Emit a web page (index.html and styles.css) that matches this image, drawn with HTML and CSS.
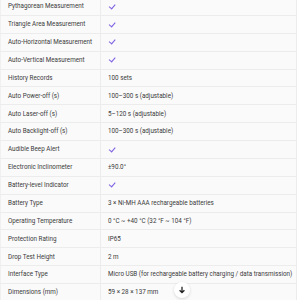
FILE: index.html
```html
<!DOCTYPE html>
<html>
<head>
<meta charset="utf-8">
<link rel="stylesheet" href="styles.css">
</head>
<body>
<div class="wrap">
<table class="specs">
<tr><td>Pythagorean Measurement</td><td><span class="ck"></span></td></tr>
<tr><td>Triangle Area Measurement</td><td><span class="ck"></span></td></tr>
<tr><td>Auto-Horizontal Measurement</td><td><span class="ck"></span></td></tr>
<tr><td>Auto-Vertical Measurement</td><td><span class="ck"></span></td></tr>
<tr><td>History Records</td><td>100 sets</td></tr>
<tr><td>Auto Power-off (s)</td><td>100–300 s (adjustable)</td></tr>
<tr><td>Auto Laser-off (s)</td><td>5–120 s (adjustable)</td></tr>
<tr><td>Auto Backlight-off (s)</td><td>100–300 s (adjustable)</td></tr>
<tr><td>Audible Beep Alert</td><td><span class="ck"></span></td></tr>
<tr><td>Electronic Inclinometer</td><td>±90.0°</td></tr>
<tr><td>Battery-level Indicator</td><td><span class="ck"></span></td></tr>
<tr><td>Battery Type</td><td>3 × Ni-MH AAA rechargeable batteries</td></tr>
<tr><td>Operating Temperature</td><td>0 °C ~ +40 °C (32 °F ~ 104 °F)</td></tr>
<tr><td>Protection Rating</td><td>IP65</td></tr>
<tr><td>Drop Test Height</td><td>2 m</td></tr>
<tr><td>Interface Type</td><td>Micro USB (for rechargeable battery charging / data transmission)</td></tr>
<tr><td>Dimensions (mm)</td><td>59 × 28 × 137 mm</td></tr>
</table>
<div class="down"><svg width="8" height="8" viewBox="0 0 8 8"><path d="M4 0.8V6.4M1.6 4.2L4 6.6L6.4 4.2" fill="none" stroke="#222" stroke-width="1.3"/></svg></div>
</div>
</body>
</html>
```
FILE: styles.css
```css
html, body { margin: 0; padding: 0; background: #ffffff; }
body { font-family: Roboto, "Noto Sans", sans-serif; color: #3a3a3a; }
.wrap { position: relative; margin-top: -3px; width: 297px; }
.specs { border-collapse: collapse; width: 297px; background: #fafafa; font-size: 6.3px; table-layout: fixed; }
.specs td { border: 1px solid #ececec; height: 16.875px; padding: 0 0 0 7px; white-space: nowrap; vertical-align: middle; line-height: 1; }
.specs td:first-child { width: 92px; border-left-color: #f0f0f0; }
.ck { display: inline-block; width: 5px; height: 2.6px; border-left: 1.5px solid #7b5ce2; border-bottom: 1.5px solid #7b5ce2; transform: rotate(-50deg); margin-left: 1px; position: relative; top: -1px; }
.down { position: absolute; left: 174px; top: 285px; width: 16px; height: 16px; border-radius: 50%; background: #fff; box-shadow: 0 1px 3px rgba(0,0,0,0.15); display: flex; align-items: center; justify-content: center; }
```
